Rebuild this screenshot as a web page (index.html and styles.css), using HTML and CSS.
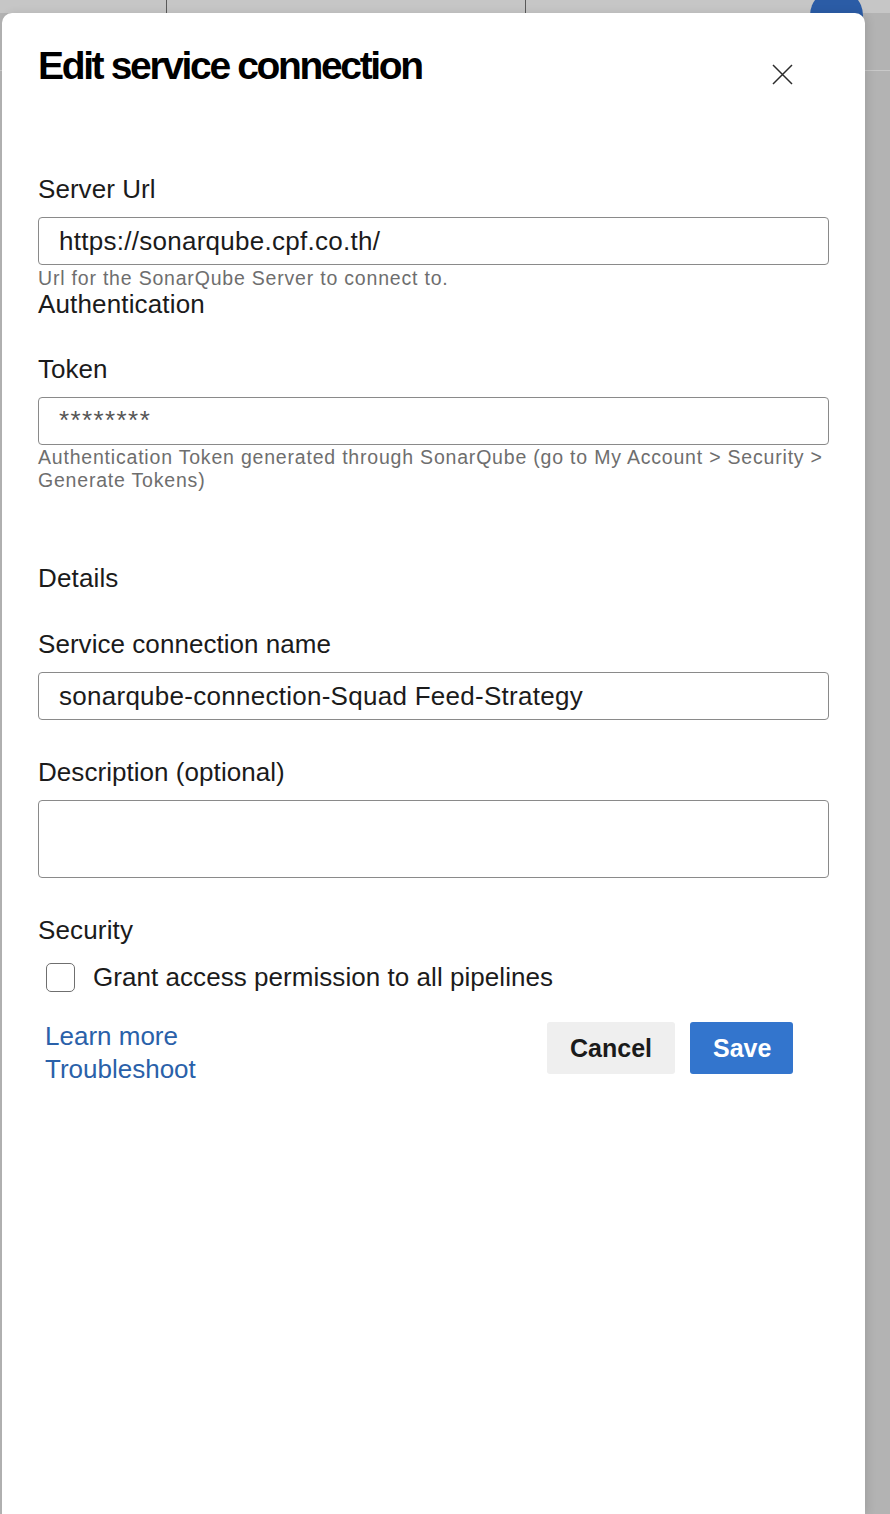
FILE: index.html
```html
<!DOCTYPE html>
<html lang="en">
<head>
<meta charset="utf-8">
<title>Edit service connection</title>
<link rel="stylesheet" href="styles.css">
</head>
<body>
<div class="topbar">
  <div class="tab tab-1"></div>
  <div class="tab tab-2"></div>
  <div class="avatar"></div>
</div>
<div class="toolbar"></div>

<div class="panel">
  <div class="header">
    <h1 class="title">Edit service connection</h1>
    <button class="close" aria-label="Close">
      <svg width="21" height="21" viewBox="0 0 21 21"><path d="M1 1 L20 20 M20 1 L1 20" stroke="#2b2b2b" stroke-width="1.5" fill="none"/></svg>
    </button>
  </div>

  <div class="field field-url">
    <label class="label">Server Url</label>
    <input class="input" type="text" value="https://sonarqube.cpf.co.th/">
    <div class="help">Url for the SonarQube Server to connect to.</div>
  </div>

  <div class="group-title">Authentication</div>

  <div class="field field-token">
    <label class="label">Token</label>
    <input class="input input-secret" type="text" value="********">
    <div class="help">Authentication Token generated through SonarQube (go to My Account &gt; Security &gt; Generate Tokens)</div>
  </div>

  <div class="group-title group-details">Details</div>

  <div class="field field-name">
    <label class="label">Service connection name</label>
    <input class="input" type="text" value="sonarqube-connection-Squad Feed-Strategy">
  </div>

  <div class="field field-desc">
    <label class="label">Description (optional)</label>
    <textarea class="textarea"></textarea>
  </div>

  <div class="group-title group-security">Security</div>

  <label class="check-row">
    <span class="checkbox"></span>
    <span class="check-text">Grant access permission to all pipelines</span>
  </label>

  <div class="footer">
    <div class="links">
      <a class="link" href="#">Learn more</a>
      <a class="link" href="#">Troubleshoot</a>
    </div>
    <div class="actions">
      <button class="btn btn-secondary">Cancel</button>
      <button class="btn btn-primary">Save</button>
    </div>
  </div>
</div>
</body>
</html>
```

FILE: styles.css
```css
* { box-sizing: border-box; }

html, body {
  margin: 0;
  height: 100%;
}

body {
  position: relative;
  overflow: hidden;
  background: #b3b3b3;
  font-family: "Liberation Sans", Arial, sans-serif;
  color: #1b1b1b;
}

.topbar {
  display: flex;
  height: 13px;
  background: #c6c6c6;
}

.tab {
  height: 100%;
  border-right: 1px solid #5a5a5a;
}
.tab-1 { width: 167px; }
.tab-2 { width: 359px; }

.avatar {
  flex: none;
  width: 53px;
  height: 53px;
  margin-top: -11px;
  margin-left: auto;
  margin-right: 27px;
  border-radius: 50%;
  background: #2b5ca6;
}

.toolbar {
  height: 58px;
  border-bottom: 1px solid #c9c9c9;
}

.panel {
  position: absolute;
  left: 2px;
  top: 13px;
  bottom: 0;
  width: 863px;
  padding: 30px 36px 0 36px;
  background: #ffffff;
  border-radius: 10px 10px 0 0;
  box-shadow: 3px 0 8px rgba(0, 0, 0, 0.1);
}

.header {
  display: flex;
  justify-content: space-between;
  align-items: flex-start;
  height: 46px;
  margin-bottom: 85px;
}

.title {
  margin: 0;
  font-size: 39px;
  line-height: 46px;
  font-weight: 700;
  letter-spacing: -2.35px;
  color: #000;
}

.close {
  display: flex;
  align-items: center;
  justify-content: center;
  width: 40px;
  height: 40px;
  margin-top: 11px;
  margin-right: 27px;
  padding: 0;
  border: 0;
  background: none;
}

.field { display: flex; flex-direction: column; }

.label {
  display: block;
  margin-bottom: 13px;
  font-size: 26px;
  line-height: 30px;
  letter-spacing: 0.05px;
  color: #1b1b1b;
}

.input {
  display: block;
  width: 100%;
  height: 48px;
  margin: 0;
  padding: 0 20px;
  border: 1px solid #8a8a8a;
  border-radius: 4px;
  background: #fff;
  font-family: "Liberation Sans", Arial, sans-serif;
  font-size: 26px;
  letter-spacing: 0.27px;
  color: #1b1b1b;
  outline: none;
}

.input-secret {
  color: #555;
  letter-spacing: 1.4px;
}

.textarea {
  display: block;
  width: 100%;
  height: 78px;
  margin: 0;
  padding: 10px 20px;
  border: 1px solid #8a8a8a;
  border-radius: 4px;
  resize: none;
  font-family: "Liberation Sans", Arial, sans-serif;
  font-size: 26px;
  outline: none;
}

.help {
  padding-top: 1.5px;
  font-size: 19.5px;
  line-height: 22.5px;
  letter-spacing: 0.8px;
  color: #6e6e6e;
}

.group-title {
  font-size: 26px;
  line-height: 30px;
  letter-spacing: 0.15px;
  color: #1b1b1b;
}

.field-token { margin-top: 34.5px; }
.group-details { margin-top: 72px; }
.field-name { margin-top: 36px; }
.field-desc { margin-top: 37px; }
.group-security { margin-top: 37px; }

.check-row {
  display: flex;
  align-items: center;
  gap: 18px;
  height: 30px;
  margin-top: 17px;
  padding-left: 8px;
  font-size: 26px;
  line-height: 30px;
  letter-spacing: 0.05px;
  color: #1b1b1b;
}

.checkbox {
  flex: none;
  width: 29px;
  height: 29px;
  border: 1px solid #6f6f6f;
  border-radius: 5px;
  background: #fff;
}

.footer {
  display: flex;
  justify-content: space-between;
  align-items: flex-start;
  margin-top: 28px;
}

.links {
  display: flex;
  flex-direction: column;
  padding-left: 7px;
}

.link {
  font-size: 26px;
  line-height: 33px;
  color: #2a61a9;
  text-decoration: none;
}

.actions {
  display: flex;
  gap: 15px;
  margin-top: 2px;
  margin-right: 36px;
}

.btn {
  height: 52px;
  padding: 0 23px;
  border: 0;
  border-radius: 3px;
  font-family: "Liberation Sans", Arial, sans-serif;
  font-size: 25px;
  font-weight: 700;
}

.btn-secondary {
  width: 128px;
  background: #efefef;
  color: #1b1b1b;
}

.btn-primary {
  width: 103px;
  background: #3375cd;
  color: #fff;
}
```
